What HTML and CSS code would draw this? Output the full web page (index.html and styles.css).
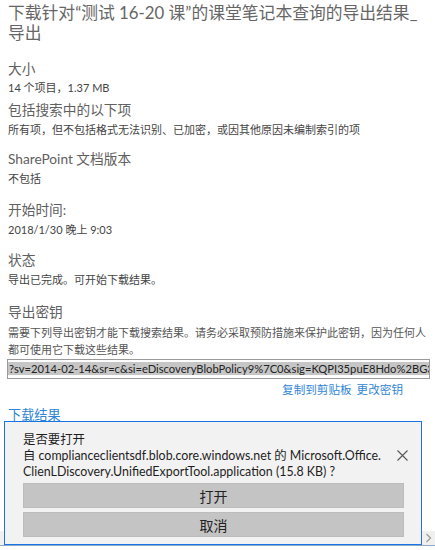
FILE: index.html
```html
<!DOCTYPE html>
<html lang="zh-CN">
<head>
<meta charset="utf-8">
<title>导出结果</title>
<link rel="stylesheet" href="styles.css">
</head>
<body>
<main class="panel">
  <h1 class="title">下载针对“测试 16-20 课”的课堂笔记本查询的导出结果_导出</h1>

  <section class="field field-size">
    <h2 class="label">大小</h2>
    <p class="value">14 个项目，1.37 MB</p>
  </section>

  <section class="field field-include">
    <h2 class="label">包括搜索中的以下项</h2>
    <p class="value">所有项，但不包括格式无法识别、已加密，或因其他原因未编制索引的项</p>
  </section>

  <section class="field field-versions">
    <h2 class="label">SharePoint 文档版本</h2>
    <p class="value">不包括</p>
  </section>

  <section class="field field-start">
    <h2 class="label">开始时间:</h2>
    <p class="value">2018/1/30 晚上 9:03</p>
  </section>

  <section class="field field-status">
    <h2 class="label">状态</h2>
    <p class="value">导出已完成。可开始下载结果。</p>
  </section>

  <section class="field field-key">
    <h2 class="label">导出密钥</h2>
    <p class="desc">需要下列导出密钥才能下载搜索结果。请务必采取预防措施来保护此密钥，因为任何人都可使用它下载这些结果。</p>
    <div class="key-box"><span class="key-text">?sv=2014-02-14&amp;sr=c&amp;si=eDiscoveryBlobPolicy9%7C0&amp;sig=KQPI35puE8Hdo%2BG3cXr7</span></div>
    <div class="key-actions">
      <a class="link" href="#">复制到剪贴板</a>
      <a class="link" href="#">更改密钥</a>
    </div>
  </section>

  <a class="link download" href="#">下载结果</a>
</main>

<!-- browser chrome: horizontal scrollbar along the bottom edge -->
<div class="hscroll">
  <span class="hscroll-arrow">
    <svg width="7" height="10" viewBox="0 0 7 10"><path d="M1.5 1 L5.5 5 L1.5 9" fill="none" stroke="#9a9a9a" stroke-width="1.2"/></svg>
  </span>
</div>

<!-- download notification bar -->
<div class="notify" role="dialog">
  <div class="notify-top">
    <div class="notify-msg">
      是否要打开<br>
      自 complianceclientsdf.blob.core.windows.net 的 Microsoft.Office.<br>
      ClienLDiscovery.UnifiedExportTool.application (15.8 KB) ?
    </div>
    <button class="notify-close" aria-label="关闭">
      <svg width="11" height="11" viewBox="0 0 11 11"><path d="M0.5 0.5 L10.5 10.5 M10.5 0.5 L0.5 10.5" stroke="#555" stroke-width="1.1" fill="none"/></svg>
    </button>
  </div>
  <button class="notify-btn">打开</button>
  <button class="notify-btn">取消</button>
</div>
</body>
</html>
```

FILE: styles.css
```css
html, body {
  margin: 0;
  padding: 0;
  background: #ffffff;
  overflow: hidden;
}

body {
  width: 435px;
  height: 550px;
  position: relative;
  font-family: Lato, "Noto Sans CJK SC", sans-serif;
}

.panel {
  padding: 3px 8px 0 8px;
}

.title {
  margin: 0;
  font-size: 16.8px;
  line-height: 20px;
  font-weight: 400;
  color: #666666;
  width: 416px;
}

.field {
  margin: 0;
}

.label {
  margin: 0;
  font-size: 13.7px;
  line-height: 20px;
  font-weight: 400;
  color: #606060;
}

.value {
  margin: 0;
  font-size: 11px;
  line-height: 20px;
  color: #444444;
}

.field-size { margin-top: 16px; }
.field-size .value { line-height: 18px; }
.field-include { margin-top: 3px; }
.field-versions { margin-top: 9px; }
.field-start { margin-top: 11px; }
.field-status { margin-top: 10px; }
.field-key { margin-top: 12px; }

.desc {
  margin: 2px 0 0 0;
  font-size: 11px;
  line-height: 17px;
  color: #555555;
}

.key-box {
  margin: 1px 0 0 -1px;
  width: 421px;
  height: 18px;
  border: 1px solid #9a9a9a;
  background: #ffffff;
  overflow: hidden;
  white-space: nowrap;
  font-size: 11.2px;
  line-height: 18px;
  color: #222222;
}

.key-text {
  background: #c6c6c6;
  padding-left: 1px;
}

.key-actions {
  margin-top: 3px;
  display: flex;
  justify-content: flex-end;
  gap: 5px;
  padding-right: 24px;
  font-size: 11.6px;
  line-height: 16px;
}

.link {
  color: #2f86d6;
  text-decoration: none;
}

.download {
  display: block;
  margin-top: 7px;
  font-size: 13.2px;
  line-height: 20px;
}

.hscroll {
  position: absolute;
  left: 0;
  right: 0;
  top: 531px;
  height: 14px;
  background: #f0f0f0;
  border-bottom: 1px solid #8ea6c8;
}

.hscroll-arrow {
  position: absolute;
  right: 2px;
  top: 2px;
  width: 9px;
  height: 10px;
  display: flex;
  align-items: center;
  justify-content: center;
}

.notify {
  position: absolute;
  left: 4px;
  top: 421px;
  width: 381px;
  height: 105px;
  padding: 10px 17px 7px 18px;
  background: #f2f2f2;
  border: 1px solid #1b74e4;
  display: flex;
  flex-direction: column;
  gap: 4px;
}

.notify-top {
  position: relative;
  margin-bottom: -1px;
}

.notify-msg {
  font-size: 12.4px;
  line-height: 16px;
  color: #1e1e1e;
  white-space: nowrap;
}

.notify-close {
  position: absolute;
  right: -4px;
  top: 18px;
  padding: 0;
  border: 0;
  background: transparent;
  width: 11px;
  height: 11px;
  line-height: 0;
}

.notify-btn {
  height: 25px;
  margin: 0;
  padding: 0;
  border: 1px solid #bcbcbc;
  background: #c4c4c4;
  font-family: "Noto Sans CJK SC", sans-serif;
  font-size: 14px;
  color: #222222;
}
```
